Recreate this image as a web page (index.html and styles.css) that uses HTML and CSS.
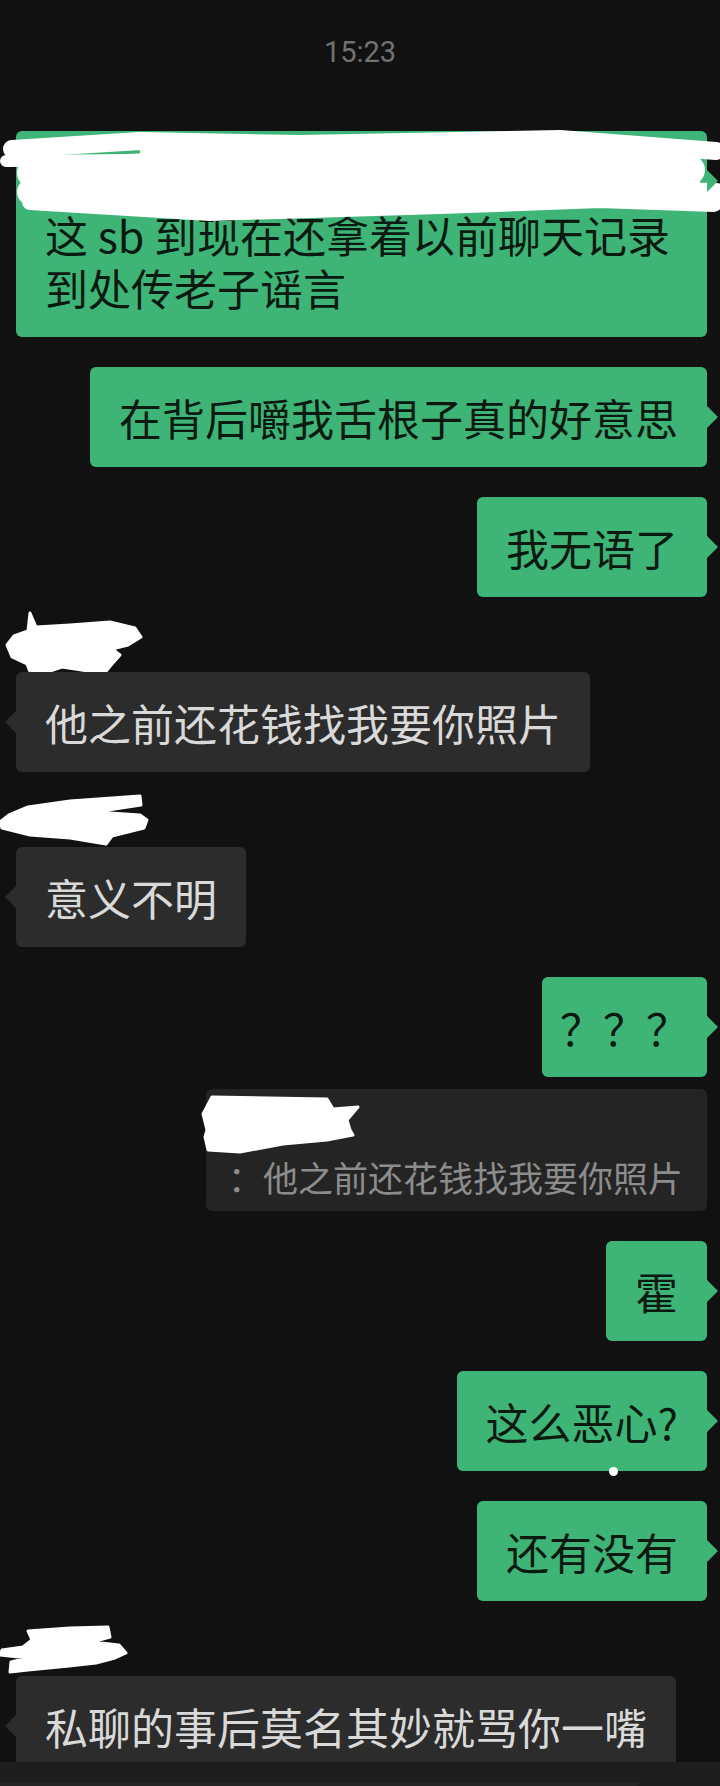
FILE: index.html
```html
<!DOCTYPE html>
<html lang="zh-CN">
<head>
<meta charset="utf-8">
<title>聊天</title>
<link rel="stylesheet" href="styles.css">
</head>
<body>
<div class="screen">
  <div class="chat">
    <div class="time">15:23</div>

    <div class="row row-me">
      <div class="bubble bubble-me">
        <div class="redacted-line"></div>
        这 sb 到现在还拿着以前聊天记录到处传老子谣言
        <svg class="scribble scribble-wide" width="720" height="110" viewBox="0 120 720 110" aria-hidden="true">
          <g fill="none" stroke="#fff" stroke-linecap="round" stroke-linejoin="round">
            <path d="M12 149 L140 141 L300 144 L560 139 L716 151" stroke-width="18"/>
            <path d="M6 161 L140 160" stroke-width="12"/>
            <path d="M32 173 L200 166 L450 161 L690 170" stroke-width="30"/>
            <path d="M30 192 L200 197 L450 191 L716 196" stroke-width="26"/>
            <path d="M30 202 L210 213 L440 206 L600 200 L714 204" stroke-width="16"/>
          </g>
          <path d="M140 140 L700 150 L700 198 L140 205 Z" fill="#fff"/>
        </svg>
      </div>
    </div>

    <div class="row row-me">
      <div class="bubble bubble-me">在背后嚼我舌根子真的好意思</div>
    </div>

    <div class="row row-me">
      <div class="bubble bubble-me">我无语了</div>
    </div>

    <div class="row row-other">
      <div class="sender">
        <svg class="scribble scribble-name1" width="160" height="80" viewBox="0 605 160 80" aria-hidden="true">
          <path d="M30 613 L36 627 L70 625 L110 622 L135 628 L141 637 L128 645 L112 649 L120 655 L112 664 L102 676 L88 671 L62 667 L32 677 L27 664 L12 657 L7 645 L14 636 L28 631 Z" fill="#fff" stroke="#fff" stroke-width="3" stroke-linejoin="round"/>
        </svg>
      </div>
      <div class="bubble bubble-other">他之前还花钱找我要你照片</div>
    </div>

    <div class="row row-other">
      <div class="sender">
        <svg class="scribble scribble-name2" width="160" height="60" viewBox="0 790 160 60" aria-hidden="true">
          <path d="M9 815 L28 807 L70 801 L140 796 L141 805 L95 812 L140 815 L147 820 L144 828 L112 836 L106 844 L70 838 L30 835 L2 828 L0 822 Z" fill="#fff" stroke="#fff" stroke-width="3" stroke-linejoin="round"/>
        </svg>
      </div>
      <div class="bubble bubble-other">意义不明</div>
    </div>

    <div class="row row-me">
      <div class="bubble bubble-me bubble-narrow">？？？</div>
    </div>

    <div class="row row-me row-quote">
      <div class="quote">
        <div class="quote-name">
          <svg class="scribble scribble-quote" width="160" height="62" viewBox="0 0 160 62" aria-hidden="true">
            <path d="M9 5 L124 7 L130 17 L155 15 L144 28 L147 38 L150 43 L124 48 L80 52 L37 60 L5 58 L2 45 L4 38 L0 22 Z" fill="#fff" stroke="#fff" stroke-width="3" stroke-linejoin="round"/>
          </svg>
        </div>
        <div class="quote-text">：他之前还花钱找我要你照片</div>
      </div>
    </div>

    <div class="row row-me">
      <div class="bubble bubble-me">霍</div>
    </div>

    <div class="row row-me">
      <div class="bubble bubble-me bubble-dot">这么恶心?</div>
    </div>

    <div class="row row-me">
      <div class="bubble bubble-me">还有没有</div>
    </div>

    <div class="row row-other">
      <div class="sender">
        <svg class="scribble scribble-name3" width="140" height="60" viewBox="0 1620 140 60" aria-hidden="true">
          <path d="M28 1631 L70 1628 L108 1627 L110 1637 L92 1642 L119 1645 L126 1653 L115 1658 L96 1663 L69 1666 L28 1670 L10 1672 L11 1662 L28 1658 L0 1655 L2 1650 L23 1647 L32 1640 Z" fill="#fff" stroke="#fff" stroke-width="3" stroke-linejoin="round"/>
        </svg>
      </div>
      <div class="bubble bubble-other">私聊的事后莫名其妙就骂你一嘴</div>
    </div>
  </div>

  <div class="inputbar">
    <div class="inputbar-edge"></div>
  </div>
</div>
</body>
</html>
```

FILE: styles.css
```css
* {
  box-sizing: border-box;
}

html,
body {
  margin: 0;
  padding: 0;
  background: #111111;
}

.screen {
  width: 720px;
  height: 1786px;
  display: flex;
  flex-direction: column;
  overflow: hidden;
  background: #111111;
  font-family: "Noto Sans CJK SC", "Noto Sans", sans-serif;
}

.chat {
  flex: 1;
  min-height: 0;
  overflow: hidden;
  display: flex;
  flex-direction: column;
  gap: 30px;
  padding-top: 32px;
}

.time {
  font-family: Roboto, "Noto Sans", sans-serif;
  font-size: 29px;
  line-height: 40px;
  color: #727272;
  text-align: center;
  margin-bottom: 29px;
}

.row {
  display: flex;
  padding: 0 13px 0 16px;
}

.row-me {
  justify-content: flex-end;
}

.row-other {
  flex-direction: column;
  align-items: flex-start;
}

.row-quote {
  margin-top: -18px;
}

.sender {
  position: relative;
  width: 100%;
  height: 45px;
}

.bubble {
  position: relative;
  max-width: 100%;
  padding: 24px 29px 23px;
  border-radius: 6px;
  font-size: 43px;
  line-height: 53px;
}

.bubble-me {
  background: #3eb577;
  color: #0b1a11;
}

.bubble-other {
  background: #2c2c2c;
  color: #d9d9d9;
}

.bubble-me::after {
  content: "";
  position: absolute;
  right: -11px;
  top: 39px;
  border-top: 11px solid transparent;
  border-bottom: 11px solid transparent;
  border-left: 11px solid #3eb577;
}

.bubble-other::before {
  content: "";
  position: absolute;
  left: -11px;
  top: 39px;
  border-top: 11px solid transparent;
  border-bottom: 11px solid transparent;
  border-right: 11px solid #2c2c2c;
}

.bubble-narrow {
  padding-left: 18px;
  padding-right: 18px;
}

.bubble-dot::before {
  content: "";
  position: absolute;
  left: 152px;
  bottom: -5px;
  width: 9px;
  height: 9px;
  border-radius: 50%;
  background: #ffffff;
}

.redacted-line {
  height: 53px;
}

.quote {
  position: relative;
  padding: 10px 24px 8px 22px;
  border-radius: 6px;
  background: #242424;
  color: #8c8c8c;
  font-size: 35px;
  line-height: 52px;
}

.quote-name {
  position: relative;
  height: 52px;
}

.scribble {
  position: absolute;
  display: block;
  overflow: visible;
}

.scribble-wide {
  left: -16px;
  top: -11px;
}

.scribble-name1 {
  left: -16px;
  top: -22px;
}

.scribble-name2 {
  left: -16px;
  top: -12px;
}

.scribble-name3 {
  left: -16px;
  top: -11px;
}

.scribble-quote {
  left: -25px;
  top: -7px;
}

.inputbar {
  flex: none;
  height: 24px;
  padding-top: 21px;
  background: #1d1d1d;
}

.inputbar-edge {
  width: 638px;
  height: 3px;
  background: #252525;
}
```
